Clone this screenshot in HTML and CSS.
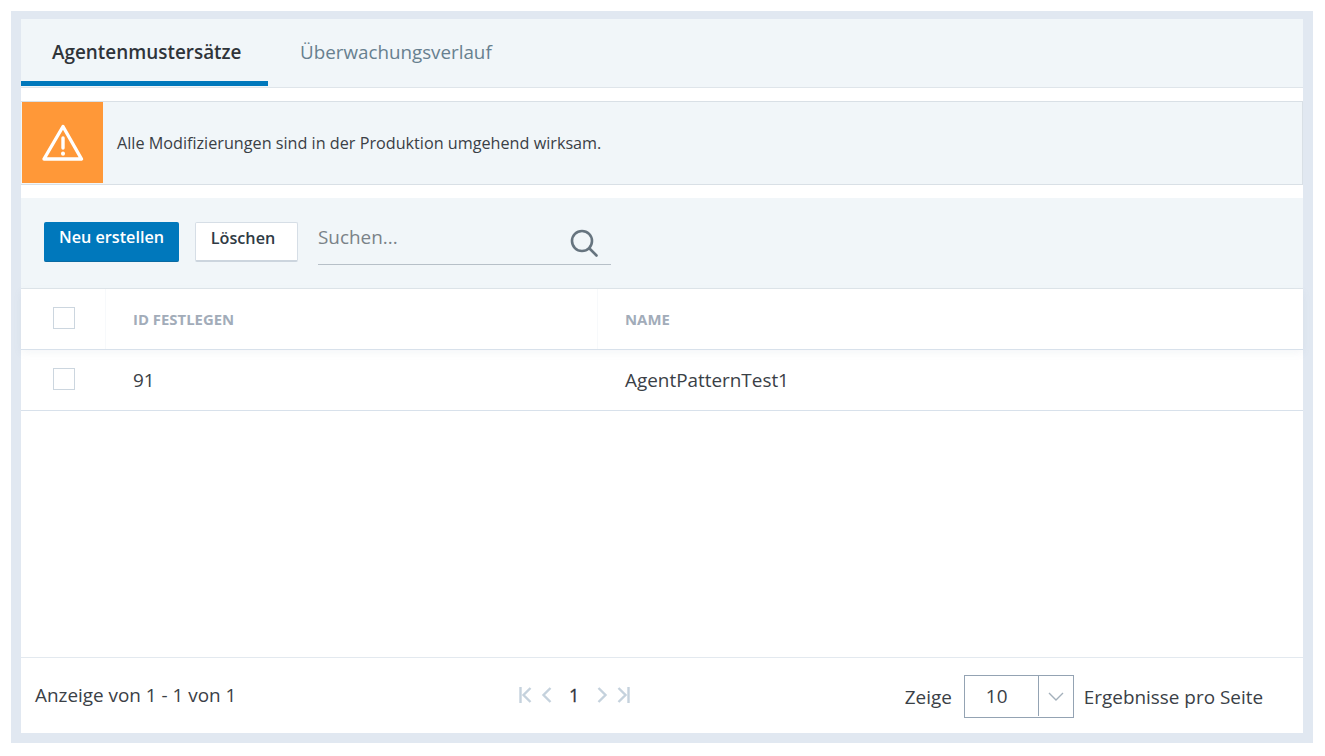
FILE: index.html
```html
<!DOCTYPE html>
<html lang="de">
<head>
<meta charset="utf-8">
<title>Agentenmustersätze</title>
<link rel="stylesheet" href="styles.css">
</head>
<body>
<main class="frame">
  <nav class="tabs">
    <div class="tab tab-active">Agentenmustersätze</div>
    <div class="tab">Überwachungsverlauf</div>
  </nav>
  <section class="alert">
    <div class="alert-icon">
      <svg width="42" height="38" viewBox="0 0 42 38" fill="none" stroke="#fff" stroke-width="3.4" stroke-linecap="round" stroke-linejoin="round">
        <path d="M21 2.5 L39.5 35 H2 Z"/>
        <path d="M21 14 V24"/>
        <path d="M21 29.5 V29.7" stroke-width="4"/>
      </svg>
    </div>
    <p class="alert-text">Alle Modifizierungen sind in der Produktion umgehend wirksam.</p>
  </section>
  <section class="toolbar">
    <button class="btn btn-primary">Neu erstellen</button>
    <button class="btn btn-secondary">Löschen</button>
    <div class="search">
      <span class="search-text">Suchen...</span>
      <svg class="search-icon" width="28" height="28" viewBox="0 0 28 28" fill="none" stroke="#66747f" stroke-width="2.6" stroke-linecap="round">
        <circle cx="12" cy="12" r="10"/>
        <path d="M19.5 19.5 L26.5 26.5"/>
      </svg>
    </div>
  </section>
  <section class="table">
    <div class="row row-head">
      <div class="cell cell-check"><span class="checkbox"></span></div>
      <div class="cell cell-id">ID FESTLEGEN</div>
      <div class="cell cell-name">NAME</div>
    </div>
    <div class="row row-body">
      <div class="cell cell-check"><span class="checkbox"></span></div>
      <div class="cell cell-id">91</div>
      <div class="cell cell-name">AgentPatternTest1</div>
    </div>
  </section>
  <footer class="footer">
    <div class="count">Anzeige von 1 - 1 von 1</div>
    <div class="pager">
      <svg width="13" height="16" viewBox="0 0 13 16" fill="none" stroke="#c5d2dd" stroke-width="2.4"><path d="M1.5 0 V16"/><path d="M11.5 1 L4.5 8 L11.5 15"/></svg>
      <svg class="pager-prev" width="11" height="16" viewBox="0 0 11 16" fill="none" stroke="#c5d2dd" stroke-width="2.4"><path d="M9.5 1 L2.5 8 L9.5 15"/></svg>
      <span class="page-num">1</span>
      <svg class="pager-next" width="11" height="16" viewBox="0 0 11 16" fill="none" stroke="#c5d2dd" stroke-width="2.4"><path d="M1.5 1 L8.5 8 L1.5 15"/></svg>
      <svg width="13" height="16" viewBox="0 0 13 16" fill="none" stroke="#c5d2dd" stroke-width="2.4"><path d="M1.5 1 L8.5 8 L1.5 15"/><path d="M11.5 0 V16"/></svg>
    </div>
    <div class="size">
      <span>Zeige</span>
      <div class="select">
        <span class="select-value">10</span>
        <span class="select-arrow">
          <svg width="16" height="9" viewBox="0 0 16 9" fill="none" stroke="#a4b0bb" stroke-width="1.4"><path d="M1 1 L8 8 L15 1"/></svg>
        </span>
      </div>
      <span>Ergebnisse pro Seite</span>
    </div>
  </footer>
</main>
</body>
</html>
```
FILE: styles.css
```css
* { box-sizing: border-box; }
html, body { margin: 0; padding: 0; background: #fff; }
body {
  font-family: "Open Sans", "Noto Sans", sans-serif;
  color: #3a4046;
  overflow: hidden;
}
.frame {
  width: 1302px;
  height: 732px;
  margin: 11px 0 0 11px;
  border: solid #e1e8f1;
  border-width: 8px 10px 10px 10px;
  background: #fff;
  display: flex;
  flex-direction: column;
}
.tabs {
  height: 69px;
  flex: none;
  background: #f1f6f9;
  border-bottom: 1px solid #dfe5ea;
  display: flex;
}
.tab {
  height: 67px;
  padding: 20px 31px 0 32px;
  font-size: 18.8px;
  line-height: 26px;
  color: #67808f;
}
.tab-active {
  width: 247px;
  padding-left: 31px;
  border-bottom: 5px solid #0078bc;
  color: #2f343a;
  font-size: 18.9px;
  font-weight: 600;
}
.alert {
  flex: none;
  height: 84px;
  margin-top: 13px;
  background: #f1f6f9;
  border: solid #d9e0e6;
  border-width: 1px 1px 1px 0;
  padding-left: 1px;
  display: flex;
  align-items: center;
}
.alert-icon {
  width: 81px;
  height: 81px;
  margin-top: -1px;
  background: #ff9838;
  display: flex;
  align-items: center;
  justify-content: center;
}
.alert-text {
  margin: 0 0 0 14px;
  font-size: 16.2px;
  line-height: 20px;
  color: #3a4046;
}
.toolbar {
  flex: none;
  height: 91px;
  margin-top: 13px;
  background: #f1f6f9;
  border-bottom: 1px solid #dfe5ea;
  padding: 24px 0 0 23px;
  display: flex;
  align-items: flex-start;
}
.btn {
  font-family: inherit;
  font-size: 16.2px;
  font-weight: 600;
  height: 40px;
  border-radius: 2px;
  padding: 0;
}
.btn-primary {
  width: 135px;
  background: #0078bc;
  border: 0;
  border-bottom: 1px solid #0a6aa2;
  color: #fff;
  padding-bottom: 10px;
}
.btn-secondary {
  width: 103px;
  margin-left: 16px;
  background: #fff;
  border: 1px solid #d6dee6;
  border-bottom: 2px solid #ccd5de;
  color: #2f3a44;
  padding: 0 7px 8px 0;
}
.search {
  width: 293px;
  height: 43px;
  margin-left: 20px;
  border-bottom: 1px solid #b7c0c8;
  display: flex;
  justify-content: space-between;
  align-items: flex-start;
}
.search-text {
  font-size: 18.9px;
  line-height: 30px;
  color: #7a8288;
}
.search-icon { margin: 7px 13px 0 0; }
.table { flex: 1; min-height: 0; }
.row { display: flex; align-items: center; }
.row-head {
  height: 61px;
  border-bottom: 1px solid #d8e1eb;
  box-shadow: 0 3px 8px rgba(120, 140, 160, 0.08);
  font-size: 14.9px;
  font-weight: 700;
  color: #a2acb9;
}
.row-body {
  height: 61px;
  border-bottom: 1px solid #d8e1eb;
  font-size: 18.9px;
  color: #3a4046;
}
.cell { height: 100%; display: flex; align-items: center; }
.cell-check { width: 84px; padding-left: 32px; flex: none; }
.cell-id { width: 492px; padding-left: 28px; flex: none; }
.cell-name { flex: 1; padding-left: 28px; }
.row-head .cell-id,
.row-head .cell-name { border-left: 1px solid #f7f9fb; padding-left: 27px; }
.checkbox {
  display: block;
  width: 22px;
  height: 22px;
  background: #fff;
  border: 1px solid #ccd6df;
  margin-top: -2px;
}
.footer {
  flex: none;
  height: 76px;
  border-top: 1px solid #e3e9ef;
  display: flex;
  align-items: center;
  padding-right: 40px;
  font-size: 18.9px;
  color: #3a4046;
}
.count { width: 498px; padding-left: 14px; margin-top: -2px; }
.pager {
  display: flex;
  align-items: center;
  margin-top: -1px;
}
.pager-prev { margin-left: 9px; }
.page-num {
  font-size: 18px;
  color: #2f343a;
  margin: -1px 18px 0 17px;
  -webkit-text-stroke: 0.3px #2f343a;
}
.pager-next { margin-right: 9px; }
.size {
  display: flex;
  align-items: center;
  margin-left: auto;
  padding-top: 2px;
  color: #3a4046;
}
.select {
  width: 110px;
  height: 43px;
  margin: 0 10px 0 12px;
  border: 1px solid #94a3b3;
  display: flex;
}
.select-value {
  width: 74px;
  height: 40px;
  border-right: 1px solid #94a3b3;
  padding-left: 21px;
  line-height: 40px;
}
.select-arrow {
  flex: 1;
  display: flex;
  align-items: center;
  justify-content: center;
}
```
